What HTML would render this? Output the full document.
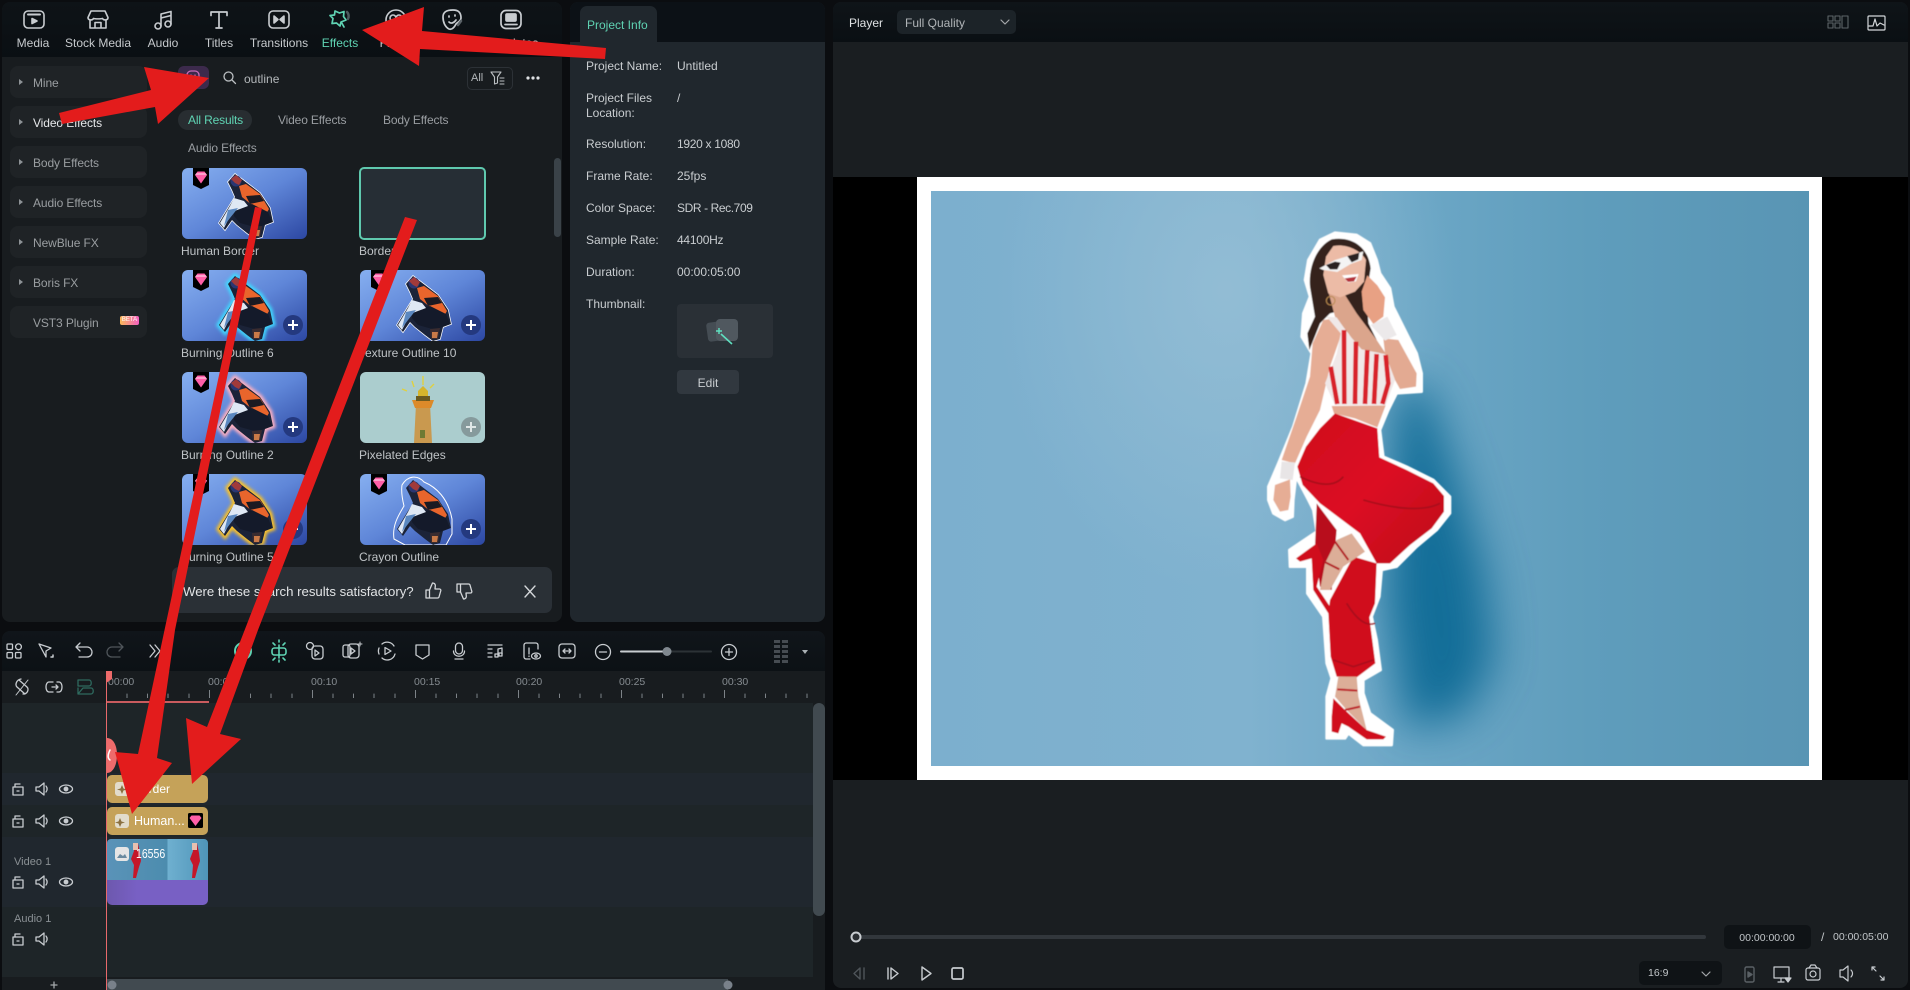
<!DOCTYPE html>
<html><head><meta charset="utf-8"><title>Editor</title>
<style>
html,body{margin:0;padding:0;width:1910px;height:990px;overflow:hidden;background:#0b0d10;font-family:"Liberation Sans",sans-serif;font-size:12px;color:#c6cacd}
div,span,svg.a{position:absolute}
.t{position:absolute;white-space:nowrap;line-height:14px;height:14px}
.c{transform:translateX(-50%)}
.btn{left:10px;width:137px;height:32px;background:#1f2326;border-radius:8px}
.ar{left:9px;top:13px;width:0;height:0;border-left:4px solid #8d9296;border-top:3px solid transparent;border-bottom:3px solid transparent}
.bt{left:23px;top:10px;color:#9a9ea1;white-space:nowrap;line-height:14px;letter-spacing:-.1px}
.th{position:absolute;width:125px;height:71px;border-radius:6px;overflow:hidden}
.lb{color:#bfc3c6}
.d{color:#c9cdd0}
.rt{color:#858b90;font-size:10.5px}
svg text{font-family:"Liberation Sans",sans-serif}
</style></head><body>
<svg width="0" height="0" style="position:absolute">
<defs>
<linearGradient id="tg" x1="0" y1="0" x2="1" y2="1"><stop offset="0" stop-color="#86aff0"/><stop offset=".5" stop-color="#5f86d8"/><stop offset="1" stop-color="#2c47a2"/></linearGradient>
<filter id="b"><feGaussianBlur stdDeviation="1.6"/></filter>
<filter id="fb" x="-5%" y="-5%" width="110%" height="110%"><feGaussianBlur stdDeviation="1.4"/></filter>
<filter id="sb" x="-40%" y="-40%" width="180%" height="180%"><feGaussianBlur stdDeviation="22"/></filter>
<symbol id="ms" viewBox="0 0 125 71"><polygon points="46,14 53,6 61,12 78,25 88,40 91,54 83,57 80,69 73,71 65,65 55,57 50,52 43,62 37,55 48,37 53,29 50,22"/></symbol>
<symbol id="man" viewBox="0 0 125 71">
<polygon points="46,14 53,6 61,12 78,25 88,40 91,54 83,57 80,69 73,71 65,65 55,57 50,52 43,62 37,55 48,37 53,29 50,22" fill="#1b2338"/>
<polygon points="57,18 64,16 78,26 87,41 84,46 70,37 60,29" fill="#e9652c"/>
<polygon points="64,28 78,27 82,33 68,36" fill="#1b1a22"/>
<polygon points="52,40 70,36 86,44 90,54 82,57 76,60 58,55 52,48" fill="#141a2a"/>
<polygon points="52,30 62,33 66,38 50,44 42,60 38,55 48,38" fill="#dfe8f4"/>
<polygon points="46,42 56,40 48,50 42,58" fill="#5b88c0"/>
<polygon points="70,59 80,58 78,69 71,69" fill="#3a2c30"/><polygon points="72,62 78,62 77,68 72,68" fill="#c97a48"/>
<circle cx="54" cy="13" r="5.500" fill="#2a3672"/><polygon points="49,11 54,7 60,12 57,17 53,15" fill="#a13a3a"/>
</symbol>
<symbol id="gem" viewBox="0 0 16 21"><path d="M0 0H16V17L8 21 0 17Z" fill="#000"/><path d="M2 7 4.500 3.500H11.500L14 7 8 15.500Z" fill="#ff5fa8"/><path d="M2 7H14L12.500 5H3.500Z" fill="#ffa0cc"/></symbol>
<radialGradient id="lt" cx=".5" cy=".5" r=".5"><stop offset="0" stop-color="#98c0d6" stop-opacity=".75"/><stop offset="1" stop-color="#98c0d6" stop-opacity="0"/></radialGradient>
<linearGradient id="bg" x1="0" y1="0" x2="1" y2="0"><stop offset="0" stop-color="#7cafce"/><stop offset=".36" stop-color="#80b2cf"/><stop offset=".55" stop-color="#6ca7c6"/><stop offset=".75" stop-color="#5f9dbc"/><stop offset="1" stop-color="#5995b4"/></linearGradient>
<linearGradient id="clip" x1="0" y1="0" x2="1" y2="0"><stop offset="0" stop-color="#5a93b8"/><stop offset=".6" stop-color="#4c8cae"/><stop offset=".6" stop-color="#6fb0d0"/><stop offset="1" stop-color="#4f94b8"/></linearGradient>
<linearGradient id="pants" x1="0" y1="0" x2="1" y2="1"><stop offset="0" stop-color="#cf0f1e"/><stop offset=".5" stop-color="#dc1022"/><stop offset="1" stop-color="#bd0c1c"/></linearGradient>
</defs></svg>

<!-- LEFT PANEL -->
<div style="left:2px;top:2px;width:560px;height:620px;background:#181c1f;border-radius:8px;overflow:hidden">
  <div style="left:0;top:0;width:560px;height:55px;background:linear-gradient(#0e1317,#0a0f13)"></div>
</div>
<div class="t c" style="left:33px;top:36px">Media</div>
<div class="t c" style="left:98px;top:36px">Stock Media</div>
<div class="t c" style="left:163px;top:36px">Audio</div>
<div class="t c" style="left:219px;top:36px">Titles</div>
<div class="t c" style="left:279px;top:36px">Transitions</div>
<div class="t c" style="left:340px;top:36px;color:#5fd3b3">Effects</div>
<div class="t c" style="left:396px;top:36px">Filters</div>
<div class="t c" style="left:452px;top:36px">Stickers</div>
<div class="t c" style="left:511px;top:36px">Templates</div>

<div class="btn" style="top:66px"><span class="ar"></span><span class="bt">Mine</span></div>
<div class="btn" style="top:106px"><span class="ar"></span><span class="bt" style="color:#e6e8ea">Video Effects</span></div>
<div class="btn" style="top:146px"><span class="ar"></span><span class="bt">Body Effects</span></div>
<div class="btn" style="top:186px"><span class="ar"></span><span class="bt">Audio Effects</span></div>
<div class="btn" style="top:226px"><span class="ar"></span><span class="bt">NewBlue FX</span></div>
<div class="btn" style="top:266px"><span class="ar"></span><span class="bt">Boris FX</span></div>
<div class="btn" style="top:306px"><span class="bt" style="left:23px">VST3 Plugin</span><span style="left:110px;top:10px;width:19px;height:9px;border-radius:2px;background:linear-gradient(90deg,#f9b95a,#f35fc0);color:#fff;font-size:6px;line-height:9px;text-align:center">BETA</span></div>

<div style="left:178px;top:66px;width:31px;height:23px;border-radius:6px;background:#3c2a4c"></div>
<div class="t" style="left:244px;top:72px;color:#b4b8bb">outline</div>
<div style="left:467px;top:67px;width:44px;height:21px;border:1px solid #2c3136;border-radius:5px"></div>
<div class="t" style="left:471px;top:71px;color:#b4b8bb;font-size:11px">All</div>
<div style="left:178px;top:110px;width:74px;height:20px;border-radius:10px;background:#282d31"></div>
<div class="t" style="left:188px;top:113px;color:#5fd3b3;letter-spacing:-.15px">All Results</div>
<div class="t" style="left:278px;top:113px;color:#9a9ea2;letter-spacing:-.15px">Video Effects</div>
<div class="t" style="left:383px;top:113px;color:#9a9ea2;letter-spacing:-.15px">Body Effects</div>
<div class="t" style="left:188px;top:141px;color:#9a9ea2;letter-spacing:-.15px">Audio Effects</div>

<!-- Thumbnails -->
<svg class="th" style="left:182px;top:168px" viewBox="0 0 125 71"><rect width="125" height="71" fill="url(#tg)"/><use href="#ms" width="125" height="71" fill="#fff" stroke="#fff" stroke-width="1.500"/><use href="#man" width="125" height="71"/><use href="#gem" x="11" y="0" width="16" height="21"/></svg>
<div style="left:359px;top:167px;width:123px;height:69px;border:2px solid #5fc9ae;border-radius:5px;background:#262e35"></div>
<svg class="th" style="left:182px;top:270px" viewBox="0 0 125 71"><rect width="125" height="71" fill="url(#tg)"/><use href="#ms" width="125" height="71" fill="none" stroke="#3fd8ff" stroke-width="5" filter="url(#b)"/><use href="#man" width="125" height="71"/><use href="#gem" x="11" y="0" width="16" height="21"/><circle cx="111" cy="55" r="10" fill="#24397f"/><path d="M106 55h10M111 50v10" stroke="#fff" stroke-width="2"/></svg>
<svg class="th" style="left:360px;top:270px" viewBox="0 0 125 71"><rect width="125" height="71" fill="url(#tg)"/><use href="#ms" width="125" height="71" fill="#fff" stroke="#fff" stroke-width="1.500"/><use href="#man" width="125" height="71"/><use href="#gem" x="11" y="0" width="16" height="21"/><circle cx="111" cy="55" r="10" fill="#24397f"/><path d="M106 55h10M111 50v10" stroke="#fff" stroke-width="2"/></svg>
<svg class="th" style="left:182px;top:372px" viewBox="0 0 125 71"><rect width="125" height="71" fill="url(#tg)"/><use href="#ms" width="125" height="71" fill="#ffc9d2" stroke="#ffb0c0" stroke-width="5" filter="url(#b)"/><use href="#man" width="125" height="71"/><use href="#gem" x="11" y="0" width="16" height="21"/><circle cx="111" cy="55" r="10" fill="#24397f"/><path d="M106 55h10M111 50v10" stroke="#fff" stroke-width="2"/></svg>
<svg class="th" style="left:360px;top:372px" viewBox="0 0 125 71"><rect width="125" height="71" fill="#abcdce"/><path d="M54 71 56 32H70L72 71Z" fill="#c9994f"/><path d="M52 28H74L71 36H55Z" fill="#dc8a2a"/><path d="M56 24H70V29H56Z" fill="#6b5a20"/><path d="M58 19 63 14 68 19V24H58Z" fill="#d6b52d"/><path d="M42 17 47 19M52 9 54 15M63 4V13M70 16 74 12" stroke="#e0d040" stroke-width="1.400"/><rect x="60" y="58" width="5" height="8" fill="#6e7a33"/><circle cx="111" cy="55" r="10" fill="#869a9c"/><path d="M106 55h10M111 50v10" stroke="#dfe6e6" stroke-width="2"/></svg>
<svg class="th" style="left:182px;top:474px" viewBox="0 0 125 71"><rect width="125" height="71" fill="url(#tg)"/><use href="#ms" width="125" height="71" fill="#fff3b0" stroke="#ffc21a" stroke-width="5" filter="url(#b)"/><use href="#man" width="125" height="71"/><use href="#gem" x="11" y="0" width="16" height="21"/><circle cx="111" cy="55" r="10" fill="#24397f"/><path d="M106 55h10M111 50v10" stroke="#fff" stroke-width="2"/></svg>
<svg class="th" style="left:360px;top:474px" viewBox="0 0 125 71"><rect width="125" height="71" fill="url(#tg)"/><path d="M42 11C48 1 58 1 64 8 76 13 88 24 92 45V60L86 71H45L34 65C32 52 38 42 44 32 42 24 41 18 42 11Z" fill="none" stroke="#fff" stroke-width="1"/><use href="#man" width="125" height="71"/><use href="#gem" x="11" y="0" width="16" height="21"/><circle cx="111" cy="55" r="10" fill="#24397f"/><path d="M106 55h10M111 50v10" stroke="#fff" stroke-width="2"/></svg>

<div class="t lb" style="left:181px;top:244px">Human Border</div>
<div class="t lb" style="left:359px;top:244px">Border</div>
<div class="t lb" style="left:181px;top:346px">Burning Outline 6</div>
<div class="t lb" style="left:359px;top:346px">Texture Outline 10</div>
<div class="t lb" style="left:181px;top:448px">Burning Outline 2</div>
<div class="t lb" style="left:359px;top:448px">Pixelated Edges</div>
<div class="t lb" style="left:181px;top:550px">Burning Outline 5</div>
<div class="t lb" style="left:359px;top:550px">Crayon Outline</div>
<div style="left:554px;top:158px;width:7px;height:79px;border-radius:4px;background:#3a4248"></div>
<div style="left:172px;top:567px;width:380px;height:46px;border-radius:7px;background:#2a3036"></div>
<div class="t" style="left:183px;top:584px;font-size:13.2px;line-height:16px;color:#e2e4e6">Were these search results satisfactory?</div>

<!-- INFO PANEL -->
<div style="left:570px;top:2px;width:255px;height:620px;background:#20272d;border-radius:8px;overflow:hidden">
  <div style="left:0;top:0;width:255px;height:40px;background:#0c1116"></div>
  <div style="left:10px;top:4px;width:77px;height:36px;background:#20272d;border-radius:7px 7px 0 0"></div>
</div>
<div class="t" style="left:587px;top:18px;color:#5fd3b3">Project Info</div>
<div class="t d" style="left:586px;top:59px">Project Name:</div><div class="t d" style="left:677px;top:59px">Untitled</div>
<div class="t d" style="left:586px;top:91px">Project Files</div><div class="t d" style="left:677px;top:91px">/</div>
<div class="t d" style="left:586px;top:106px">Location:</div>
<div class="t d" style="left:586px;top:137px">Resolution:</div><div class="t d" style="left:677px;top:137px;letter-spacing:-.3px">1920 x 1080</div>
<div class="t d" style="left:586px;top:169px">Frame Rate:</div><div class="t d" style="left:677px;top:169px">25fps</div>
<div class="t d" style="left:586px;top:201px">Color Space:</div><div class="t d" style="left:677px;top:201px;letter-spacing:-.4px">SDR - Rec.709</div>
<div class="t d" style="left:586px;top:233px">Sample Rate:</div><div class="t d" style="left:677px;top:233px;letter-spacing:-.25px">44100Hz</div>
<div class="t d" style="left:586px;top:265px">Duration:</div><div class="t d" style="left:677px;top:265px">00:00:05:00</div>
<div class="t d" style="left:586px;top:297px">Thumbnail:</div>
<div style="left:677px;top:304px;width:96px;height:54px;border-radius:4px;background:#2a3036"></div>
<svg class="a" style="left:705px;top:316px" width="40" height="32"><rect x="2" y="6" width="16" height="19" rx="3" fill="#454d54" transform="rotate(-8 10 15)"/><rect x="11" y="3" width="22" height="22" rx="4" fill="#50585f"/><path d="M16 18 27 28" stroke="#5fe0c0" stroke-width="1.600"/><path d="M14 12v6M11 15h6" stroke="#5fe0c0" stroke-width="1.400"/></svg>
<div style="left:677px;top:370px;width:62px;height:24px;border-radius:4px;background:#31383f"></div>
<div class="t c" style="left:708px;top:376px;color:#c9cdd0">Edit</div>

<!-- PLAYER -->
<div style="left:833px;top:2px;width:1075px;height:986px;background:#1a1e21;border-radius:8px;overflow:hidden">
  <div style="left:0;top:0;width:1075px;height:40px;background:linear-gradient(#0f1418,#0a0f13)"></div>
  <div style="left:0;top:175px;width:1075px;height:603px;background:#000"></div>
  <div style="left:84px;top:175px;width:905px;height:603px;background:#fff"></div>
</div>
<div class="t" style="left:849px;top:16px;color:#dfe1e3">Player</div>
<div style="left:897px;top:10px;width:119px;height:24px;background:#1c2328;border-radius:5px"></div>
<div class="t" style="left:905px;top:16px;color:#b0b4b7">Full Quality</div>
<div style="left:1724px;top:925px;width:87px;height:24px;background:#0f1316;border-radius:5px"></div>
<div class="t c" style="left:1767px;top:931px;font-size:10.5px;color:#c2c6c9">00:00:00:00</div>
<div class="t" style="left:1821px;top:930px;color:#c2c6c9">/</div>
<div class="t" style="left:1833px;top:930px;font-size:10.5px;color:#c2c6c9">00:00:05:00</div>
<div style="left:1639px;top:961px;width:83px;height:24px;background:#0f1316;border-radius:5px"></div>
<div class="t" style="left:1648px;top:966px;font-size:10.5px;color:#c2c6c9">16:9</div>
<div style="left:856px;top:935px;width:850px;height:4px;background:#32373c;border-radius:2px"></div>

<!-- PICTURE -->
<svg class="a" style="left:0;top:0;z-index:2" width="1910" height="990">
<clipPath id="pc"><rect x="931" y="191" width="878" height="575"/></clipPath>
<g clip-path="url(#pc)">
<rect x="931" y="191" width="878" height="575" fill="url(#bg)"/>
<ellipse cx="1225" cy="290" rx="230" ry="300" fill="url(#lt)"/>
<polygon points="1395,385 1425,385 1455,470 1485,570 1495,660 1465,715 1405,730 1385,600" fill="#05628f" opacity=".82" filter="url(#sb)"/>
</g>
<g transform="translate(1220,210) scale(.33333)" filter="url(#fb)">
<polygon fill="#fff" stroke="#fff" stroke-width="8" stroke-linejoin="round" points="345,68 410,75 450,100 470,150 480,190 510,235 520,290 550,350 590,430 605,490 605,545 530,550 505,600 480,660 490,740 560,770 640,810 690,860 690,910 650,960 590,1010 530,1070 485,1080 478,1160 455,1220 470,1290 482,1380 430,1410 430,1450 450,1510 518,1560 515,1605 430,1605 385,1570 375,1585 320,1585 320,1460 335,1405 320,1360 310,1220 262,1150 262,1070 210,1070 208,1020 290,965 280,900 265,870 228,800 220,870 218,920 195,930 160,910 145,870 145,830 175,760 220,650 260,520 275,430 245,380 250,310 270,260 255,210 265,150 300,90"/>
<!-- hair -->
<path d="M335 88C395 78 445 110 452 175L440 250 445 340 470 390 410 360 370 300 330 310 300 340 268 420 262 370 285 320 270 230C265 170 290 110 335 88Z" fill="#35201a"/>
<!-- neck/chest -->
<polygon points="325,245 375,255 410,310 470,390 500,435 420,420 385,370 345,320" fill="#dba58c"/>
<!-- face -->
<path d="M340 108C385 100 425 125 438 150L432 215 405 245 360 262 325 250 310 195 318 140Z" fill="#ecbba6"/>
<path d="M298 175 345 150 430 124 425 150 392 162 352 186 310 180Z" fill="#f4f4f4"/>
<path d="M318 165 345 155 362 158 352 178 330 178ZM382 138 418 128 415 148 395 157Z" fill="#2a2020"/>
<path d="M366 196 416 192 408 214 384 218Z" fill="#fff"/><path d="M374 205 410 200 402 214 384 216Z" fill="#b5303a"/>
<circle cx="332" cy="272" r="13" fill="none" stroke="#b98a50" stroke-width="3"/>
<!-- raised arm -->
<path d="M425 245 442 196 472 226 495 262 490 320 460 342 430 300Z" fill="#e8a184"/>
<polygon points="490,385 535,390 590,490 588,530 540,537 525,510 495,430" fill="#e3aa92"/>
<polygon points="452,345 502,320 530,375 495,392" fill="#ece9ea"/>
<!-- left arm -->
<polygon points="310,330 345,325 365,370 330,470 300,600 260,680 225,760 185,750 230,620 270,500 278,400" fill="#e6ad95"/>
<polygon points="185,755 225,757 218,810 180,805" fill="#e8e5e6"/>
<polygon points="165,825 210,808 212,860 205,900 180,905 160,870" fill="#e6ad95"/>
<!-- top -->
<polygon points="320,320 350,322 385,372 425,418 495,432 525,510 497,585 345,585 315,520 350,432 362,370" fill="#f0e8e8"/>
<g stroke="#d8202c" stroke-width="14" fill="none"><path d="M332 470 352 582M372 360 373 582M408 395 405 582M442 420 435 582M470 432 462 582M497 435 505 520 487 582"/></g>
<!-- midriff -->
<polygon points="335,588 497,586 472,652 405,625 342,610" fill="#e3aa92"/>
<!-- pants -->
<polygon points="290,880 350,960 335,1140 300,1130 285,1010" fill="#b80c1c"/>
<polygon points="345,610 472,655 478,742 560,780 640,820 672,858 672,905 635,955 570,1005 510,1060 470,1060 420,970 300,880 248,825 232,770 258,710 300,655" fill="url(#pants)"/>
<polygon points="330,1170 400,1040 470,1060 465,1180 448,1222 466,1360 410,1402 350,1400 332,1340 325,1210" fill="#d0101e"/>
<path d="M240 800C300 830 345 830 370 800M430 870C500 890 600 910 660 880M380 1180C410 1230 440 1250 465 1240M340 1350 400 1370 460 1350" stroke="#a80d1c" stroke-width="5" fill="none"/>
<polygon points="350,990 395,970 435,1025 370,1070 330,1140 300,1140 315,1060" fill="#dcae98"/>
<!-- raised shoe -->
<polygon points="228,1045 290,1000 310,1050 290,1130 330,1190 325,1210 280,1140 275,1045 240,1055" fill="#d0111f"/>
<path d="M345 995 385 1050M312 1055 358 1078" stroke="#b31a24" stroke-width="6"/>
<!-- standing leg -->
<polygon points="355,1400 410,1400 415,1460 440,1560 380,1500 345,1460" fill="#dcae98"/>
<polygon points="340,1465 375,1500 440,1560 498,1580 490,1588 440,1588 385,1550 365,1540 355,1570 335,1565 335,1520" fill="#d0101e"/>
<path d="M352 1438 412 1442M375 1500 420 1490" stroke="#bd1c26" stroke-width="6"/>
</g>
</svg>

<!-- TIMELINE -->
<div style="left:2px;top:631px;width:823px;height:359px;background:#181c1f;border-radius:8px 8px 0 0;overflow:hidden">
  <div style="left:0;top:0;width:823px;height:40px;background:linear-gradient(#10151a,#0c1115)"></div>
  <div style="left:0;top:72px;width:811px;height:70px;background:#1e2528"></div>
  <div style="left:0;top:142px;width:811px;height:32px;background:#20272e"></div>
  <div style="left:0;top:174px;width:811px;height:32px;background:#1e2528"></div>
  <div style="left:0;top:206px;width:811px;height:70px;background:#20272e"></div>
  <div style="left:0;top:276px;width:811px;height:70px;background:#1e2528"></div>
  <div style="left:105px;top:348px;width:621px;height:11px;background:#414a50"></div>
  <div style="left:811px;top:72px;width:12px;height:213px;background:#414a50;border-radius:6px"></div>
</div>
<div class="t rt" style="left:108px;top:675px">00:00</div>
<div class="t rt" style="left:208px;top:675px">00:05</div>
<div class="t rt" style="left:311px;top:675px">00:10</div>
<div class="t rt" style="left:414px;top:675px">00:15</div>
<div class="t rt" style="left:516px;top:675px">00:20</div>
<div class="t rt" style="left:619px;top:675px">00:25</div>
<div class="t rt" style="left:722px;top:675px">00:30</div>
<div class="t" style="left:14px;top:855px;font-size:11px;color:#8a9094">Video 1</div>
<div class="t" style="left:14px;top:912px;font-size:11px;color:#8a9094">Audio 1</div>
<div style="left:107px;top:775px;width:101px;height:28px;background:#c5a259;border-radius:5px"></div>
<div style="left:107px;top:807px;width:101px;height:28px;background:#c5a259;border-radius:5px"></div>
<div class="t" style="left:134px;top:782px;color:#fff">Border</div>
<div class="t" style="left:134px;top:814px;font-size:12.5px;color:#fff">Human...</div>
<div style="left:107px;top:870px;width:101px;height:35px;background:linear-gradient(90deg,#6d58ae,#7860c4 30%);border-radius:0 0 5px 5px"></div>
<svg class="a" style="left:107px;top:839px" width="101" height="41"><rect width="101" height="50" rx="4" fill="url(#clip)"/><g fill="#c5162a"><path d="M27 4 31 4 33 14 34 22 32 28 29 39 26 39 27 26 24 20 27 12Z"/><path d="M86 4 90 4 92 14 93 22 91 28 88 39 85 39 86 26 83 20 86 12Z"/></g><path d="M26 4h5v7h-5zM85 4h5v7h-5z" fill="#e8c0b0"/></svg>
<div class="t" style="left:136px;top:847px;font-size:12.5px;color:#fff;transform:scaleX(.84);transform-origin:0 0">16556</div>

<svg class="a" style="left:0;top:0;z-index:3" width="1910" height="990" fill="none" stroke="#c8ccd0" stroke-width="1.400" stroke-linecap="round" stroke-linejoin="round">
<!-- clip chips -->
<rect x="115" y="782" width="14" height="14" rx="3" fill="#e2dccb" stroke="none"/><path d="M122 785l1.500 3.500 3.500 1-3.500 1-1.500 3.500-1.500-3.500-3.500-1 3.500-1z" fill="#8a7040" stroke="none"/>
<rect x="115" y="814" width="14" height="14" rx="3" fill="#e2dccb" stroke="none"/><path d="M120 818l1.500 3.500 3.500 1-3.500 1-1.500 3.500-1.500-3.500-3.500-1 3.500-1z" fill="#8a7040" stroke="none"/>
<rect x="115" y="847" width="14" height="14" rx="3" fill="#e5e5e5" stroke="none"/><path d="M117 858l3-4 3 2 2-2 2 4z" fill="#6a8aa0" stroke="none"/>
<g stroke="none"><rect x="188" y="813" width="15" height="15" rx="1.500" fill="#000"/><path d="M189.500 818l2-2.500h8l2 2.500-6 8z" fill="#ff5fa8"/></g>

<!-- top toolbar icons -->
<g transform="translate(34,19.500)" stroke-width="1.600"><rect x="-10" y="-8.500" width="20" height="17" rx="4"/><path d="M-6-5H6" stroke-width="2"/><path d="M-2-1 3 1.500-2 4Z" fill="#c8ccd0"/></g>
<g transform="translate(98,19.500)" stroke-width="1.600"><path d="M-7-8.500H7L10-2C10 1 5.500 1 4.500-1 3-.5-3-.5-4.500-1-5.500 1-10 1-10-2Z"/><path d="M-8 1V8.500H8V1M-3 8.500V3H3V8.500"/></g>
<g transform="translate(163,20)" stroke-width="1.600"><circle cx="-5" cy="6" r="3"/><circle cx="5" cy="4" r="3"/><path d="M-2 6V-6L8-8.500V4M-2-2 8-4.500"/></g>
<g transform="translate(219,20)" stroke-width="1.700"><path d="M-8-4.500V-8H8V-4.500M0-8V8M-3 8H3"/></g>
<g transform="translate(279,19.500)" stroke-width="1.600"><rect x="-10" y="-8.500" width="20" height="17" rx="4"/><path d="M-5-3.500-1 0-5 3.500ZM5-3.500 1 0 5 3.500Z" fill="#c8ccd0"/></g>
<g transform="translate(338,19)" stroke="#5fd3b3" stroke-width="1.700"><path d="M-3-8 1.500-6 6-7.500 5.500-2.500 8 1 3 3 2 7-1.500 4-6 4.500-5-.5-8-3.500-3.500-4Z"/><path d="M3.500 3.500 6 8"/><path d="M9-7C11-5 11-2 10 0" stroke="#4e5a5e" stroke-width="2.500"/></g>
<g transform="translate(396,20)" stroke-width="1.600"><circle r="10"/><circle cx="-3" cy="-2" r="3"/><circle cx="3" cy="-2" r="3"/></g>
<g transform="translate(452,20)" stroke-width="1.700"><path d="M-9-3C-9-9-4-10 1-10 7-10 9-7 9-2 9 1 6 2 4 4 2 8 0 10-3 9-7 7-9 2-9-3Z"/><path d="M-3-4v1M3-5v1M-3 2C-1 4 2 3 4 0"/><path d="M6 5 9 1" stroke="#5a6267" stroke-width="2.500"/></g>
<g transform="translate(511,19.500)" stroke-width="1.700"><rect x="-10" y="-9" width="20" height="18" rx="5"/><rect x="-5" y="-5.500" width="10" height="7" rx="1" fill="#c8ccd0"/><path d="M-6 5H6"/></g>

<!-- search row -->
<g transform="translate(193,78)" stroke="#c86bb8" stroke-width="1.300"><rect x="-6" y="-7" width="12" height="11" rx="4"/><path d="M-2-3v1M2-3v1"/></g>
<g stroke="#bcc0c3" stroke-width="1.300"><circle cx="228.500" cy="76.500" r="4.500"/><path d="M232 80 235.500 83.500"/></g>
<g stroke="#bcc0c3" stroke-width="1.100"><path d="M491 72H501L497.500 77V83L494.500 84V77Z"/><path d="M500 78H504M500 81H504M500 84H504"/></g>
<g fill="#dfe2e4" stroke="none"><circle cx="528" cy="78" r="1.600"/><circle cx="533" cy="78" r="1.600"/><circle cx="538" cy="78" r="1.600"/></g>
<!-- feedback -->
<g transform="translate(433,591)" stroke="#d4d7da" stroke-width="1.300"><path d="M-7-1V7H-3.500V-1ZM-3.500-1-.5-8C2-8 2.500-6 2.300-5L2-2H6.500C8-2 8-.5 7.700 0L6 6C5.700 7 5 7 4.500 7H-3.500"/></g>
<g transform="translate(464,591) scale(1,-1)" stroke="#d4d7da" stroke-width="1.300"><path d="M-7-1V7H-3.500V-1ZM-3.500-1-.5-8C2-8 2.500-6 2.300-5L2-2H6.500C8-2 8-.5 7.700 0L6 6C5.700 7 5 7 4.500 7H-3.500"/></g>
<path d="M525 586 535 597M535 586 525 597" stroke="#d4d7da"/>

<!-- player header -->
<path d="M1001 20 1005 24 1009 20" stroke="#a4a8ab" stroke-width="1.200"/>
<g stroke="#5d6468" stroke-width="1.100"><rect x="1828" y="16" width="5" height="5"/><rect x="1828" y="23" width="5" height="5"/><rect x="1835" y="16" width="5" height="5"/><rect x="1835" y="23" width="5" height="5"/><rect x="1842" y="16" width="6" height="12"/></g>
<g stroke="#d4d7da" stroke-width="1.200"><rect x="1868" y="16" width="17" height="14" rx="1"/><path d="M1869 26 1873 26 1875 19 1877 26 1880 23 1884 25"/></g>

<!-- player controls -->
<circle cx="856" cy="937" r="4.500" fill="#2a2e32" stroke="#c8ccd0" stroke-width="2"/>
<path d="M1702 972 1706 976 1710 972" stroke="#a4a8ab" stroke-width="1.200"/>
<g stroke="#4f555a"><path d="M864 968V979M860 968 854 973.500 860 979Z"/></g>
<g stroke="#c8ccd0"><path d="M888 968V979M891 968 898 973.500 891 979Z"/><path d="M922 967 931 973.500 922 980Z"/><rect x="952" y="968" width="11" height="11" rx="1.500" stroke-width="1.700"/></g>
<g stroke="#5a6065"><rect x="1745" y="967" width="9" height="15" rx="1.500"/><path d="M1748 972 1752 974.500 1748 977Z" fill="#5a6065"/></g>
<g stroke="#c8ccd0" stroke-width="1.200"><path d="M1774 967H1789V978H1774ZM1781 978V982M1778 982H1784"/><path d="M1785 978 1791 978 1788 982Z" fill="#c8ccd0"/><rect x="1806" y="968" width="14" height="12" rx="2"/><circle cx="1813" cy="974" r="3"/><path d="M1809 968 1811 965H1815L1817 968"/><path d="M1840 970H1843L1848 966V981L1843 977H1840ZM1851 970C1853 972 1853 975 1851 977"/><path d="M1872 967 1876 971M1872 967V970M1872 967H1875M1884 980 1880 976M1884 980V977M1884 980H1881"/></g>

<!-- timeline toolbar -->
<g stroke-width="1.300">
<g transform="translate(14,651)"><rect x="-7" y="-7" width="5.500" height="5.500" rx="1"/><circle cx="4.500" cy="-4.200" r="2.900"/><rect x="-7" y="1.500" width="5.500" height="5.500" rx="1"/><rect x="1.500" y="1.500" width="5.500" height="5.500" rx="1"/></g>
<path d="M39 644 51 648 46 651 46 657Z"/><path d="M51 657 53 657 53 655" stroke-width="1.500"/>
<path d="M76 647H87C91 647 92 651 92 652 92 655 90 657 87 657H79M76 647 80 643M76 647 80 651"/>
<path d="M123 647H112C108 647 107 651 107 652 107 655 109 657 112 657H120M123 647 119 643M123 647 119 651" stroke="#4f555a"/>
<path d="M150 645 155 651 150 657M155 645 160 651 155 657"/>
<g stroke="#5fd3b3"><circle cx="243" cy="651" r="8" stroke-width="2"/></g>
<g stroke="#5fd3b3" stroke-width="1.600"><rect x="272" y="648" width="14" height="7" rx="2.500"/><path d="M279 645V658M279 642V640M273 643 275 645M285 643 283 645M279 660V662M273 660 275 658M285 660 283 658"/></g>
<g transform="translate(315,651)"><circle cx="-5" cy="-5" r="3.500"/><rect x="-3" y="-5" width="11" height="13" rx="3"/><path d="M0-1 4 2 0 5Z"/></g>
<g transform="translate(351,651)"><rect x="-8" y="-6" width="7" height="12" rx="2"/><rect x="-3" y="-7" width="11" height="14" rx="3"/><path d="M0-3 4 0 0 3Z"/><path d="M9-9V-5M7-7H11" stroke-width="1"/></g>
<g transform="translate(387,651)"><path d="M-5-7A8 8 0 0 1 7-5M8 3A8 8 0 0 1-5 7M-8 3A8 8 0 0 1-8-3"/><path d="M-2-3.500 4 0-2 3.500Z"/></g>
<path d="M416 645H429V655L422.500 659 416 655Z"/>
<g transform="translate(459,651)"><rect x="-3.500" y="-8" width="7" height="11" rx="3.500"/><path d="M-5.500 0C-5.500 7 5.500 7 5.500 0M-4 8H4"/></g>
<g transform="translate(495,651)"><path d="M-7-6H7M-7-2H-3M-7 2H-3M-7 6H-3"/><rect x="0" y="3" width="3" height="3"/><rect x="4" y="2" width="3" height="3"/><path d="M3 4V-2L7-3V3"/></g>
<g transform="translate(531,651)"><path d="M-7 6V-6C-7-7-6-8-5-8H5C6-8 7-7 7-6V-2M-7 6C-7 7-6 8-5 8H-1M-2-3V3M-2 5v.5"/><circle cx="5" cy="5" r="1.200"/><ellipse cx="5" cy="5" rx="4.500" ry="3"/></g>
<g transform="translate(567,651)"><rect x="-8" y="-7" width="16" height="14" rx="3"/><path d="M-4 0H4M-4 0-2-2M-4 0-2 2M4 0 2-2M4 0 2 2"/></g>
<circle cx="603" cy="652" r="7.500"/><path d="M599.500 652H606.500"/>
<path d="M621 651.500H667" stroke-width="2"/><path d="M667 651.500H711" stroke="#2c3236" stroke-width="2"/>
<circle cx="667" cy="651.500" r="4.500" fill="#80888f" stroke="none"/>
<circle cx="729" cy="652" r="7.500"/><path d="M725.500 652H732.500M729 648.500V655.500"/>
<g fill="#464c52" stroke="none"><rect x="774" y="640" width="6" height="3"/><rect x="782" y="640" width="6" height="3"/><rect x="774" y="645" width="6" height="3"/><rect x="782" y="645" width="6" height="3"/><rect x="774" y="650" width="6" height="3"/><rect x="782" y="650" width="6" height="3"/><rect x="774" y="655" width="6" height="3"/><rect x="782" y="655" width="6" height="3"/><rect x="774" y="660" width="6" height="3"/><rect x="782" y="660" width="6" height="3"/><path d="M802 650H808L805 654Z" fill="#aab0b4"/></g>
<!-- ruler-left icons -->
<g transform="translate(22,687)"><path d="M-1-8C-6-7-7-2-5 0L3 7M1 7C6 7 7 2 5 0L-3-7"/><path d="M-6 8 6-7" stroke-width="1"/></g>
<g transform="translate(54,687)"><path d="M-1-5H-5C-9-5-9 5-5 5H-1M3-5H5C9-5 9 5 5 5H3M-2 0H4M4 0 2-2M4 0 2 2"/></g>
<g transform="translate(86,687)" stroke="#2e6a5e"><path d="M-8-7H3C6-7 6-1 3-1H-3M-3 1H5C8 1 8 7 5 7H-8ZM-8-7V-1H-3M-8 1V7"/></g>
<!-- track icons -->
<g transform="translate(18,789)"><rect x="-5" y="-2" width="10" height="8"/><path d="M-3-2V-5H2M-1 2H1"/></g>
<g transform="translate(42,789)"><path d="M-6-2H-3L2-6V6L-3 2H-6ZM4-3C5.500-1 5.500 1 4 3"/></g>
<g transform="translate(66,789)"><ellipse rx="6.500" ry="4"/><circle r="1.800" fill="#c8ccd0"/></g>
<g transform="translate(18,821)"><rect x="-5" y="-2" width="10" height="8"/><path d="M-3-2V-5H2M-1 2H1"/></g>
<g transform="translate(42,821)"><path d="M-6-2H-3L2-6V6L-3 2H-6ZM4-3C5.500-1 5.500 1 4 3"/></g>
<g transform="translate(66,821)"><ellipse rx="6.500" ry="4"/><circle r="1.800" fill="#c8ccd0"/></g>
<g transform="translate(18,882)"><rect x="-5" y="-2" width="10" height="8"/><path d="M-3-2V-5H2M-1 2H1"/></g>
<g transform="translate(42,882)"><path d="M-6-2H-3L2-6V6L-3 2H-6ZM4-3C5.500-1 5.500 1 4 3"/></g>
<g transform="translate(66,882)"><ellipse rx="6.500" ry="4"/><circle r="1.800" fill="#c8ccd0"/></g>
<g transform="translate(18,939)"><rect x="-5" y="-2" width="10" height="8"/><path d="M-3-2V-5H2M-1 2H1"/></g>
<g transform="translate(42,939)"><path d="M-6-2H-3L2-6V6L-3 2H-6ZM4-3C5.500-1 5.500 1 4 3"/></g>
<path d="M51 985H57M54 982V988" stroke="#a4a8ab"/>
</g>
<!-- ruler ticks -->
<pattern id="rp" patternUnits="userSpaceOnUse" x="105" y="0" width="103" height="10"><path d="M1.500 0V8M22 4V8M42.500 4V8M63 4V8M84 4V8" stroke="#7d8388" stroke-width="1" fill="none"/></pattern>
<rect x="105" y="690" width="705" height="8" fill="url(#rp)" stroke="none"/>
<!-- scroll knobs -->
<circle cx="112" cy="985" r="4.500" fill="#79818a" stroke="none"/><circle cx="728" cy="985" r="4.500" fill="#79818a" stroke="none"/>
<!-- playhead -->
<path d="M107 702H209" stroke="#c85b5e" stroke-width="2" stroke-linecap="butt"/>
<path d="M107 738C113 738 117 745 117 755 117 765 113 773 107 773Z" fill="#ee6b6b" stroke="none"/>
<path d="M110 750C108 754 107 758 110 760" stroke="#fff" stroke-width="1.500"/>
<path d="M106.500 671V990" stroke="#e8696b" stroke-width="1" stroke-linecap="butt"/>
<path d="M106 671H112V679L106 683Z" fill="#ee6b6b" stroke="none"/>
</svg>

<!-- RED ARROWS -->
<svg class="a" style="left:0;top:0;z-index:9" width="1910" height="990">
<g fill="#e31c1c">
<polygon points="362,30 424,7 422,31 606,48 605,59 420,49 419,66"/>
<polygon points="209,78 144,67 151,90 59,113 62,124 155,107 158,124"/>
<polygon points="255,207 262,208 175,630 157,758 172,763 132,814 115,752 138,754"/>
<polygon points="405,217 417,220 258,630 220,734 241,739 192,784 186,718 207,727"/>
</g>
</svg>
</body></html>
